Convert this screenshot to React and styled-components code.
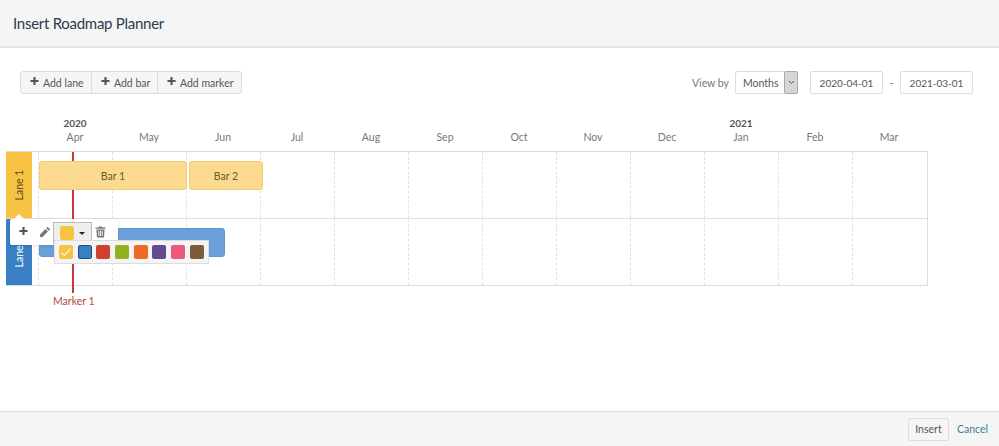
import React from "react";
import styled, { createGlobalStyle } from "styled-components";

const GlobalStyle = createGlobalStyle`
html, body { margin: 0; padding: 0; background: #fff; }
body { font-family: Lato, "Open Sans", "Liberation Sans", sans-serif; color: #555; }
* { box-sizing: border-box; }
`;

const Page = styled.div`
display: flex;
flex-direction: column;
width: 999px;
height: 446px;
overflow: hidden;
`;

const Header = styled.header`
height: 48px;
padding: 0 13px;
display: flex;
align-items: center;
background: #f5f5f5;
border-bottom: 2px solid #e6e6e6;
`;

const Title = styled.h1`
margin: 0 0 1px;
font-size: 15px;
letter-spacing: -0.27px;
font-weight: 400;
color: #2d3a4d;
`;

const Body = styled.main`
flex: 1;
display: flex;
flex-direction: column;
`;

const Toolbar = styled.div`
display: flex;
justify-content: space-between;
align-items: center;
height: 23px;
margin-top: 23px;
padding: 0 26px 0 20px;
`;

const BtnGroup = styled.div`
display: flex;
height: 23px;
border: 1px solid #ddd;
border-radius: 3px;
background: #f5f5f5;
`;

const AddBtn = styled.button`
display: flex;
align-items: center;
gap: 4px;
height: 100%;
width: ${(p) => p.$w}px;
padding: 0 0 0 9px;
border: 0;
border-left: ${(p) => (p.$first ? "0" : "1px solid #ddd")};
background: transparent;
font: inherit;
font-size: 10.5px;
color: #555;
white-space: nowrap;
`;

const Filters = styled.div`
display: flex;
align-items: center;
`;

const Label = styled.span`
font-size: 10.5px;
color: #777;
margin-right: 6px;
`;

const SelectBox = styled.div`
display: flex;
width: 63px;
height: 23px;
margin-right: 12px;
border: 1px solid #ddd;
border-radius: 2px;
font-size: 10.5px;
color: #555;
`;

const SelectText = styled.span`
flex: 1;
padding: 5px 0 0 7px;
`;

const SelectArrow = styled.span`
display: flex;
align-items: center;
justify-content: center;
width: 14px;
background: #d6d6d6;
border: 1px solid #aaa;
margin: -1px;
border-radius: 2px;
`;

const DateBox = styled.div`
display: flex;
align-items: center;
justify-content: center;
width: 73px;
height: 23px;
border: 1px solid #ddd;
border-radius: 2px;
font-size: 10px;
color: #555;
`;

const Dash = styled.span`
width: 17px;
text-align: center;
font-size: 10.5px;
color: #777;
`;

const Chart = styled.section`
position: relative;
margin: 19px 0 0 6px;
width: 922px;
`;

const MonthRow = styled.div`
display: grid;
grid-template-columns: repeat(12, 74px);
height: 38px;
padding-left: 32px;
`;

const MonthCol = styled.div`
display: flex;
flex-direction: column;
justify-content: flex-end;
align-items: center;
padding-bottom: 7px;
font-size: 10.5px;
line-height: 14px;
color: #777;
`;

const Year = styled.strong`
font-size: 10px;
font-weight: 700;
color: #555;
`;

const Lanes = styled.div`
border: 1px solid #ddd;
border-left: 0;
`;

const Lane = styled.div`
display: flex;
height: ${(p) => p.$h}px;
border-top: ${(p) => (p.$divider ? "1px solid #ddd" : "0")};
`;

const LaneHead = styled.div`
display: flex;
align-items: center;
justify-content: center;
width: 26px;
flex: none;
background: ${(p) => p.$color};
color: ${(p) => p.$text};
font-size: 10.5px;
`;

const LaneName = styled.span`
transform: rotate(-90deg);
white-space: nowrap;
`;

const Track = styled.div`
flex: 1;
display: grid;
grid-template-columns: repeat(12, 74px);
grid-template-rows: 1fr;
margin-left: 6px;
`;

const GridCell = styled.div`
grid-row: 1;
grid-column: ${(p) => p.$col};
border-left: 1px dashed #e2e2e2;
`;

const Bar = styled.div`
position: relative;
z-index: 2;
grid-row: 1;
grid-column: ${(p) => p.$col};
align-self: start;
display: flex;
align-items: center;
justify-content: center;
height: 29px;
width: ${(p) => p.$w}px;
margin: ${(p) => p.$top}px 0 0 ${(p) => p.$left}px;
background: ${(p) => p.$bg};
border: 1px solid ${(p) => p.$border};
border-radius: 3px;
font-size: 10.5px;
color: #6b5a33;
`;

const Marker = styled.div`
position: absolute;
z-index: 1;
left: 66px;
top: 39px;
width: 2px;
height: 141px;
background: #c9373a;
`;

const MarkerLabel = styled.span`
position: absolute;
left: 47px;
top: 182px;
font-size: 10.5px;
color: #b5473f;
`;

const Popup = styled.div`
position: absolute;
z-index: 3;
left: 4px;
top: 106px;
display: flex;
align-items: center;
width: 108px;
height: 26px;
background: #fff;
border-radius: 2px;
box-shadow: 0 1px 3px rgba(0, 0, 0, 0.12);
&::before {
  content: "";
  position: absolute;
  left: 4px;
  top: -5px;
  border: 5px solid transparent;
  border-top: 0;
  border-bottom: 5px solid #fff;
}
`;

const PopupIcon = styled.span`
display: flex;
align-items: center;
justify-content: center;
flex: none;
width: ${(p) => p.$w}px;
height: 100%;
`;

const ColorToggle = styled.div`
display: flex;
align-items: center;
gap: 5px;
flex: none;
width: 39px;
height: 22px;
margin-top: 2px;
padding-left: 6px;
background: #eee;
border: 1px solid #bbb;
`;

const Caret = styled.span`
width: 0;
height: 0;
border: 3px solid transparent;
border-top: 3px solid #222;
border-bottom: 0;
`;

const Swatch = styled.span`
display: flex;
align-items: center;
justify-content: center;
flex: none;
width: 14px;
height: 14px;
border-radius: 2px;
background: ${(p) => p.$color};
border: ${(p) => (p.$active ? "1px solid #1f4f80" : "0")};
`;

const Palette = styled.div`
position: absolute;
z-index: 3;
left: 48px;
top: 127px;
display: flex;
align-items: center;
gap: 4.7px;
width: 155px;
height: 24px;
padding-left: 4px;
background: #f4f4f4;
border: 1px solid #ddd;
`;

const Footer = styled.footer`
height: 35px;
display: flex;
align-items: center;
justify-content: flex-end;
gap: 8px;
padding-right: 11px;
background: #f5f5f5;
border-top: 1px solid #ddd;
`;

const InsertBtn = styled.button`
width: 41px;
height: 23px;
padding: 0;
background: #f5f5f5;
border: 1px solid #ddd;
border-radius: 2px;
font: inherit;
font-size: 10.5px;
color: #555;
`;

const CancelLink = styled.a`
font-size: 10.5px;
color: #3a7ca5;
`;

const PlusSvg = styled.svg`
margin-top: -3px;
`;

const months = ["Apr", "May", "Jun", "Jul", "Aug", "Sep", "Oct", "Nov", "Dec", "Jan", "Feb", "Mar"];
const years = { Apr: "2020", Jan: "2021" };
const colors = ["#f6c343", "#3a7fc4", "#d0402f", "#8fb31d", "#ec6a24", "#644a90", "#ee5a7e", "#7d5a3a"];

const Plus = () => (
  <PlusSvg width="9" height="10" viewBox="0 0 10 10">
    <path d="M3.8 0.5h2.4v3.3h3.3v2.4H6.2v3.3H3.8V6.2H0.5V3.8h3.3z" fill="#555" />
  </PlusSvg>
);

const Pencil = () => (
  <svg width="12" height="12" viewBox="0 0 12 12">
    <path d="M8.6 0.8l2.6 2.6-1.4 1.4-2.6-2.6zM6.4 3l2.6 2.6-5.4 5.4H1v-2.6z" fill="#777" />
  </svg>
);

const Trash = () => (
  <svg width="11" height="12" viewBox="0 0 11 12">
    <path d="M4 0.5h3l.6 1H10.5v1.2H.5V1.5h2.9zM1.4 3.4h8.2L9 11.5H2zM3.4 4.8v5.2h.9V4.8zm1.7 0v5.2h.9V4.8zm1.7 0v5.2h.9V4.8z" fill="#777" fillRule="evenodd" />
  </svg>
);

const Check = () => (
  <svg width="12" height="12" viewBox="0 0 12 12">
    <path d="M1.5 6.5l3 3 6-7" fill="none" stroke="#fff0c0" strokeWidth="1.4" />
  </svg>
);

const Chevron = () => (
  <svg width="7" height="5" viewBox="0 0 7 5">
    <path d="M1 1l2.5 2.5L6 1" fill="none" stroke="#555" strokeWidth="1" />
  </svg>
);

const GridCells = () => months.map((m, i) => <GridCell key={m} $col={i + 1} />);

export default function App() {
  return (
    <Page>
      <GlobalStyle />
      <Header>
        <Title>Insert Roadmap Planner</Title>
      </Header>
      <Body>
        <Toolbar>
          <BtnGroup>
            <AddBtn $first $w={70}><Plus />Add lane</AddBtn>
            <AddBtn $w={66}><Plus />Add bar</AddBtn>
            <AddBtn $w={84}><Plus />Add marker</AddBtn>
          </BtnGroup>
          <Filters>
            <Label>View by</Label>
            <SelectBox>
              <SelectText>Months</SelectText>
              <SelectArrow><Chevron /></SelectArrow>
            </SelectBox>
            <DateBox>2020-04-01</DateBox>
            <Dash>-</Dash>
            <DateBox>2021-03-01</DateBox>
          </Filters>
        </Toolbar>
        <Chart>
          <MonthRow>
            {months.map((m) => (
              <MonthCol key={m}>
                {years[m] && <Year>{years[m]}</Year>}
                {m}
              </MonthCol>
            ))}
          </MonthRow>
          <Lanes>
            <Lane $h={66}>
              <LaneHead $color="#f6c343" $text="#5a4a20"><LaneName>Lane 1</LaneName></LaneHead>
              <Track>
                <GridCells />
                <Bar $col="1 / 3" $w={148} $left={1} $top={9} $bg="#fbd98e" $border="#f2cc74">Bar 1</Bar>
                <Bar $col="3 / 5" $w={74} $left={3} $top={9} $bg="#fbd98e" $border="#f2cc74">Bar 2</Bar>
              </Track>
            </Lane>
            <Lane $h={67} $divider>
              <LaneHead $color="#3a7fc4" $text="#fff"><LaneName>Lane 2</LaneName></LaneHead>
              <Track>
                <GridCells />
                <Bar $col="1 / 4" $w={186} $left={1} $top={9} $bg="#6a9fd8" $border="#5f95cf" />
              </Track>
            </Lane>
          </Lanes>
          <Marker />
          <MarkerLabel>Marker 1</MarkerLabel>
          <Popup>
            <PopupIcon $w={26}><Plus /></PopupIcon>
            <PopupIcon $w={17}><Pencil /></PopupIcon>
            <ColorToggle>
              <Swatch $color="#f6c343" />
              <Caret />
            </ColorToggle>
            <PopupIcon $w={16}><Trash /></PopupIcon>
          </Popup>
          <Palette>
            {colors.map((c, i) => (
              <Swatch key={c} $color={c} $active={i === 1}>
                {i === 0 && <Check />}
              </Swatch>
            ))}
          </Palette>
        </Chart>
      </Body>
      <Footer>
        <InsertBtn>Insert</InsertBtn>
        <CancelLink>Cancel</CancelLink>
      </Footer>
    </Page>
  );
}
